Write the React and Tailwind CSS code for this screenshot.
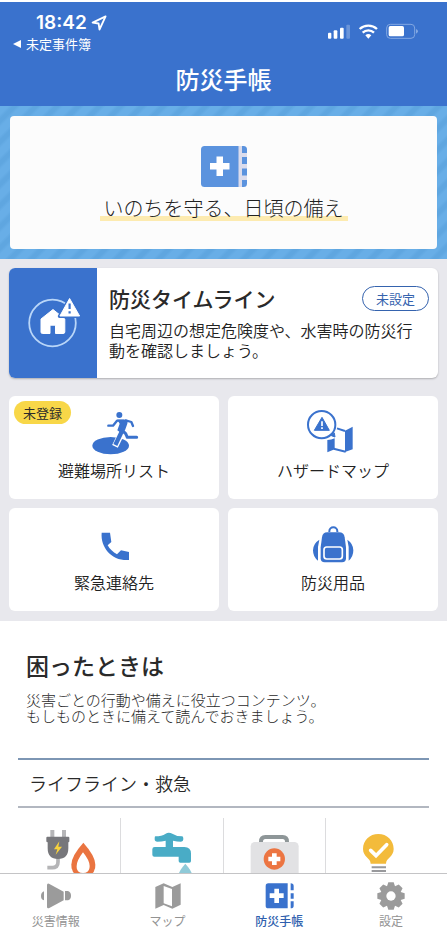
// App.jsx

// ─── Status bar ──────────────────────────────────────────────────────────────
function LocationIcon() {
  return (
    <svg viewBox="0 0 16 16" className="w-4 h-4" fill="none" stroke="#fff" strokeWidth="1.8" strokeLinejoin="round">
      <path d="M14.6 1.4L1.6 7.6l6 .9.9 6z" />
    </svg>
  )
}

function StatusIcons() {
  return (
    <svg viewBox="309 70 276 51" className="w-[92px] h-[17px]" fill="#fff">
      <rect x="312" y="99" width="10" height="18" rx="3" />
      <rect x="329" y="92" width="11" height="25" rx="3" />
      <rect x="348" y="84" width="11" height="33" rx="3" />
      <rect x="367" y="75" width="11" height="42" rx="3" opacity=".25" />
      <g fill="none" stroke="#fff" strokeWidth="7">
        <path d="M407 88a38 38 0 0 1 52 0" />
        <path d="M416 99a25 25 0 0 1 34 0" />
      </g>
      <path d="M424 107a13 13 0 0 1 18 0l-9 10z" />
      <rect x="488" y="74" width="84" height="42" rx="11" fill="none" stroke="#83a8e2" strokeWidth="3" />
      <rect x="494" y="79" width="46" height="31" rx="5" />
      <path d="M576 88q6 3 6 7t-6 7z" fill="#83a8e2" />
    </svg>
  )
}

function Header() {
  return (
    <header className="shrink-0 bg-[#3a72cd] border-t-2 border-white text-white">
      <div className="flex justify-between items-start pt-[9px] pl-3 pr-7">
        <div>
          <div className="flex items-center gap-1 pl-6 h-6 font-['Inter'] text-[19px] font-semibold">
            <span>18:42</span>
            <LocationIcon />
          </div>
          <a href="#back" className="flex items-center gap-1 h-[18px] text-[13px] leading-[18px]">
            <svg viewBox="0 0 10 8" className="w-[10px] h-2" fill="#fff"><path d="M1 4l8-4v8z" /></svg>
            未定事件簿
          </a>
        </div>
        <div className="pt-3"><StatusIcons /></div>
      </div>
      <h1 className="mt-2 pb-2.5 text-center text-[24px] leading-[35px] font-medium">防災手帳</h1>
    </header>
  )
}

// ─── Banner ──────────────────────────────────────────────────────────────────
function BannerIcon() {
  return (
    <svg viewBox="0 0 46 41" className="w-[46px] h-[41px]">
      <rect width="46" height="41" rx="3.5" fill="#5b93de" />
      <path d="M37.500 0H41v7h5v4h-5v7h5v4.500h-5v7h5V34h-5v7h-3.500z" fill="#dbdcec" />
      <path d="M15.500 10.500H22V17h6.500v6.500H22V30h-6.500v-6.500H9V17h6.500z" fill="#fff" />
    </svg>
  )
}

function Banner() {
  return (
    <div className="p-2.5 bg-[repeating-linear-gradient(135deg,#68aee7_0px,#68aee7_6px,#5fa6e0_9px,#5fa6e0_12px,#68aee7_15px)]">
      <div className="flex flex-col items-center rounded bg-[#fcfcfc] pt-[30px] pb-[27px]">
        <BannerIcon />
        <p className="mt-[10px] px-1 font-['Liberation_Serif','Noto_Sans_CJK_JP',serif] text-[20px] leading-[25px] font-light text-[#222] bg-[linear-gradient(transparent_19px,#fdebb0_19px,#fdebb0_24px,transparent_24px)]">
          いのちを守る、日頃の備え
        </p>
      </div>
    </div>
  )
}

// ─── Timeline card ───────────────────────────────────────────────────────────
function HomeAlertIcon() {
  return (
    <svg viewBox="26 297 55 52" className="w-[55px] h-[52px]">
      <circle cx="52.500" cy="323" r="23.300" fill="none" stroke="#b9d6f8" strokeWidth="1.800" />
      <path d="M53 309.500l-12 9.500v13q0 1.500 1.500 1.500H50v-8.300h5.500v8.300H63q1.800 0 1.800-1.500V319z" fill="#fff" stroke="#fff" strokeLinejoin="round" />
      <path d="M69.600 298.500L80 316.300H59.500z" fill="#fff" stroke="#3a72cd" strokeWidth="3.500" strokeLinejoin="round" />
      <path d="M69.600 298.500L79.600 316H59.900z" fill="#fff" stroke="#fff" strokeWidth="1" strokeLinejoin="round" />
      <path d="M69.600 303.500v5.500M69.600 311.200v2.300" stroke="#3a72cd" strokeWidth="2.200" />
    </svg>
  )
}

function TimelineCard() {
  return (
    <a href="#timeline" className="flex rounded-md overflow-hidden bg-white shadow-[0_1px_2px_rgba(0,0,0,0.25)]">
      <div className="flex w-[88px] shrink-0 items-center justify-center bg-[#3a72cd]">
        <HomeAlertIcon />
      </div>
      <div className="flex-1 pl-3 pr-[9px] pt-4 pb-[18px]">
        <div className="flex items-center justify-between">
          <h2 className="text-[21px] leading-7 font-medium text-[#2a2a2a]">防災タイムライン</h2>
          <span className="rounded-full border border-[#3563ae] px-[13px] text-[13px] leading-[23px] text-[#3563ae]">未設定</span>
        </div>
        <p className="mt-2 pr-1 text-[16px] leading-5 font-[350] text-[#222]">
          自宅周辺の想定危険度や、水害時の防災行動を確認しましょう。
        </p>
      </div>
    </a>
  )
}

// ─── Menu tiles ──────────────────────────────────────────────────────────────
function EvacuationIcon() {
  return (
    <svg viewBox="258 63 168 132" className="w-14 h-11">
      <ellipse cx="332" cy="167" rx="55" ry="26" fill="#3a72cd" />
      <path d="M371 116L345 169" stroke="#fff" strokeWidth="19" fill="none" />
      <g fill="none" stroke="#3a72cd" strokeLinecap="round" strokeLinejoin="round">
        <path d="M325 107h14l12-15h20" strokeWidth="7" />
        <path d="M377 91l17 5 5 12" strokeWidth="7" />
        <path d="M369 98l-6 20 14 13 5 11h28" strokeWidth="9" />
      </g>
      <path d="M352 89h28q5 4 2 12l-7 20-12 8-11-8 7-20z" fill="#3a72cd" />
      <path d="M368 119L346 165" stroke="#3a72cd" strokeWidth="13" fill="none" />
      <circle cx="358" cy="75" r="9" fill="#3a72cd" />
    </svg>
  )
}

function HazardIcon() {
  return (
    <svg viewBox="246 63 168 132" className="w-14 h-11 overflow-visible">
      <path d="M313 150q12 0 22-5v33l-22 9zM366 122l23-12v68l-23 8z" fill="#3a72cd" />
      <path d="M342 115l24 8M332 176l36 9" stroke="#3a72cd" strokeWidth="6" fill="none" />
      <path d="M325 137l11 4-2-12z" fill="#3a72cd" stroke="#3a72cd" strokeWidth="3" strokeLinejoin="round" />
      <circle cx="296" cy="104" r="41" fill="#fff" stroke="#3a72cd" strokeWidth="6" />
      <path d="M297 82l22 39h-45z" fill="#3a72cd" stroke="#3a72cd" strokeWidth="3" strokeLinejoin="round" />
      <path d="M297 94v14M297 112v5" stroke="#fff" strokeWidth="5" />
    </svg>
  )
}

function PhoneIcon() {
  return (
    <svg viewBox="258 399 168 132" className="w-14 h-11">
      <path d="M305 428h25l4 28-11 10c6 11 16 20 28 27l12-12 24 5v24c-50 4-86-36-82-82z" fill="#3a72cd" />
    </svg>
  )
}

function BackpackIcon() {
  return (
    <svg viewBox="246 399 168 132" className="w-14 h-11">
      <path d="M319 426v-2a12 12 0 0 1 24 0v2" fill="none" stroke="#3a72cd" strokeWidth="6" />
      <path d="M313 427h35q15 0 17 15l4 30v33q0 12-12 12h-52q-12 0-12-12v-33l4-30q2-15 16-15z" fill="#3a72cd" />
      <rect x="303" y="471" width="55" height="36" rx="8" fill="none" stroke="#fff" strokeWidth="5" />
      <path d="M289 449l-4 22v41q-15-11-15-31t19-32zM373 449l4 22v41q14-11 14-31t-18-32z" fill="#3a72cd" />
    </svg>
  )
}

const MENU = [
  { label: '避難場所リスト', Icon: EvacuationIcon, badge: '未登録' },
  { label: 'ハザードマップ', Icon: HazardIcon },
  { label: '緊急連絡先',     Icon: PhoneIcon },
  { label: '防災用品',       Icon: BackpackIcon },
]

function MenuTile({ label, Icon, badge }) {
  return (
    <button type="button" className="relative flex flex-col items-center rounded-md bg-white pt-[15px] pb-[17px]">
      {badge && (
        <span className="absolute left-[5px] top-[5px] rounded-full bg-[#f8d748] px-[9px] text-[13px] leading-[23px] text-[#2a2a2a]">
          {badge}
        </span>
      )}
      <Icon />
      <span className="mt-[3px] text-[16px] leading-6 font-[350] text-[#222]">{label}</span>
    </button>
  )
}

// ─── Guide contents ──────────────────────────────────────────────────────────
function PowerGasIcon() {
  return (
    <svg viewBox="89 78 240 180" className="w-20 h-[60px]">
      <path d="M153 90h12v22h-12zM188 90h12v22h-12z" fill="#b5b5b7" />
      <path d="M176 172v14q0 17-17 17h-15" fill="none" stroke="#b5b5b7" strokeWidth="11" />
      <path d="M144 110h63q3 0 3 3v11q0 3-3 3v18q0 32-31 32t-31-32v-18q-4 0-4-3v-11q0-3 3-3z" fill="#77777b" />
      <path d="M180 124l-16 24h10l-5 16 19-24h-11z" fill="#f8d23c" />
      <path d="M252 128q36 40 36 66 0 36-36 36t-36-36q0-26 36-66z" fill="#ea7440" />
      <path d="M251 157q20 25 20 41 0 21-20 21t-19-21q0-16 19-41z" fill="#fff" />
    </svg>
  )
}

function WaterIcon() {
  return (
    <svg viewBox="396 78 240 180" className="w-20 h-[60px]">
      <path d="M466 109q19 0 31-8 9-6 20 0 12 8 29 8 4 0 4 7v2q0 7-7 7-12 0-24-3v19h34q20 0 20 20v22q0 5-5 5h-27q-5 0-5-5v-13h-73q-6 0-6-6v-16q0-7 7-7h33v-19q-12 3-25 3-8 0-8-7v-2q0-7 2-7z" fill="#49acc6" />
      <path d="M556 191q21 23 21 39 0 20-21 20t-21-20q0-16 21-39z" fill="#8fcad8" />
    </svg>
  )
}

function FirstAidIcon() {
  return (
    <svg viewBox="34 78 240 180" className="w-20 h-[60px]">
      <path d="M115 130v-5q0-14 13-14h52q13 0 13 14v5" fill="none" stroke="#8e9698" strokeWidth="12" />
      <rect x="84" y="126" width="144" height="120" rx="13" fill="#e2e2e4" />
      <circle cx="155" cy="177" r="32" fill="#ec7542" />
      <path d="M148 160h14v10h11v14h-11v11h-14v-11h-11v-14h11z" fill="#fff" />
    </svg>
  )
}

function BulbIcon() {
  return (
    <svg viewBox="342 78 240 180" className="w-20 h-[60px]">
      <path d="M463 102c26 0 46 19 46 45 0 24-23 27-23 44h-46c0-17-23-20-23-44 0-26 20-45 46-45z" fill="#f3bb3b" />
      <path d="M440 151l16 16 32-33" fill="none" stroke="#fff" strokeWidth="11" strokeLinecap="round" />
      <path d="M443 202h43M443 213h43M446 224h37" stroke="#98999c" strokeWidth="6" />
    </svg>
  )
}

const GUIDES = [
  { name: '電気・ガス', Icon: PowerGasIcon },
  { name: '水道',       Icon: WaterIcon },
  { name: '応急手当',   Icon: FirstAidIcon },
  { name: '豆知識',     Icon: BulbIcon },
]

const GUIDE_LEAD = '災害ごとの行動や備えに役立つコンテンツ。\nもしものときに備えて読んでおきましょう。'

function GuideSection() {
  return (
    <section className="bg-white pt-[27px] text-[#2a2a2a]">
      <div className="px-[26px]">
        <h2 className="text-[23px] leading-[34px] font-medium">困ったときは</h2>
        <p className="mt-[10px] whitespace-pre-line text-[15px] leading-4 font-light">{GUIDE_LEAD}</p>
      </div>
      <div className="mx-[18px] mt-[34px]">
        <h3 className="border-t-2 border-b-2 border-t-[#7d96b4] border-b-[#b2b7c0] pl-[11px] text-[18px] leading-[46px] font-[350]">
          ライフライン・救急
        </h3>
        <div className="mt-[10px] grid grid-cols-4 divide-x divide-[#dcdcde]">
          {GUIDES.map(({ name, Icon }) => (
            <button key={name} type="button" aria-label={name} className="flex h-24 justify-center pt-2">
              <Icon />
            </button>
          ))}
        </div>
      </div>
    </section>
  )
}

// ─── Bottom navigation ───────────────────────────────────────────────────────
function MegaphoneIcon() {
  return (
    <svg viewBox="108 242 120 90" className="w-10 h-[30px]" fill="#9b9b9b">
      <path d="M132 273v27q-9-2-9-13t9-14z" />
      <path d="M141 254q0-6 6-4l44 24v26l-43 23q-7 3-7-4z" />
      <path d="M195 272h9q9 3 9 14t-9 14h-9z" />
    </svg>
  )
}

function MapIcon() {
  return (
    <svg viewBox="443 242 120 90" className="w-10 h-[30px]" fill="#9b9b9b">
      <path fillRule="evenodd" d="M465 260l25-11 26 11 25-11v64l-25 12-26-11-25 11zM490 257v52l25 9v-52z" />
    </svg>
  )
}

function NotebookIcon() {
  return (
    <svg viewBox="109 242 120 90" className="w-10 h-[30px]" fill="#3a72cd">
      <path d="M137 249h58v75h-58q-8 0-8-8v-59q0-8 8-8z" />
      <path d="M204 249q9 0 9 8v13h-9zM204 279h9v16h-9zM204 303h9v13q0 8-9 8z" />
      <path d="M155 265h14v14h14v14h-14v15h-14v-15h-14v-14h14z" fill="#fff" />
    </svg>
  )
}

function GearIcon() {
  return (
    <svg viewBox="444 242 120 90" className="w-10 h-[30px]">
      <g fill="#9b9b9b">
        {[0, 45, 90, 135].map((deg) => (
          <path key={deg} transform={`rotate(${deg} 504 287)`} d="M496 246h16l4 12v58l-4 12h-16l-4-12v-58z" />
        ))}
        <circle cx="504" cy="287" r="31" />
      </g>
      <circle cx="504" cy="287" r="14" fill="#fff" />
    </svg>
  )
}

const NAV = [
  { label: '災害情報', href: '#info',     Icon: MegaphoneIcon },
  { label: 'マップ',   href: '#map',      Icon: MapIcon },
  { label: '防災手帳', href: '#notebook', Icon: NotebookIcon, active: true },
  { label: '設定',     href: '#settings', Icon: GearIcon },
]

function BottomNav() {
  return (
    <nav className="grid shrink-0 grid-cols-4 border-t border-[#c4c4c6] bg-white pt-[7px] pb-[11px]">
      {NAV.map(({ label, href, Icon, active }) => (
        <a
          key={label}
          href={href}
          aria-current={active ? 'page' : undefined}
          className={`flex flex-col items-center gap-[2px] text-[12px] leading-4 ${active ? 'font-medium text-[#2f5fae]' : 'text-[#939393]'}`}
        >
          <Icon />
          {label}
        </a>
      ))}
    </nav>
  )
}

export default function App() {
  return (
    <div lang="ja" className="flex h-screen flex-col bg-white font-['Noto_Sans_CJK_JP',sans-serif]">
      <Header />
      <main className="min-h-0 flex-1 overflow-y-auto [scrollbar-width:none]">
        <Banner />
        <div className="bg-[#e8e8ed] px-[9px] pt-[9px] pb-[10px]">
          <TimelineCard />
          <div className="mt-[18px] grid grid-cols-2 gap-[9px]">
            {MENU.map((item) => <MenuTile key={item.label} {...item} />)}
          </div>
        </div>
        <GuideSection />
      </main>
      <BottomNav />
    </div>
  )
}
